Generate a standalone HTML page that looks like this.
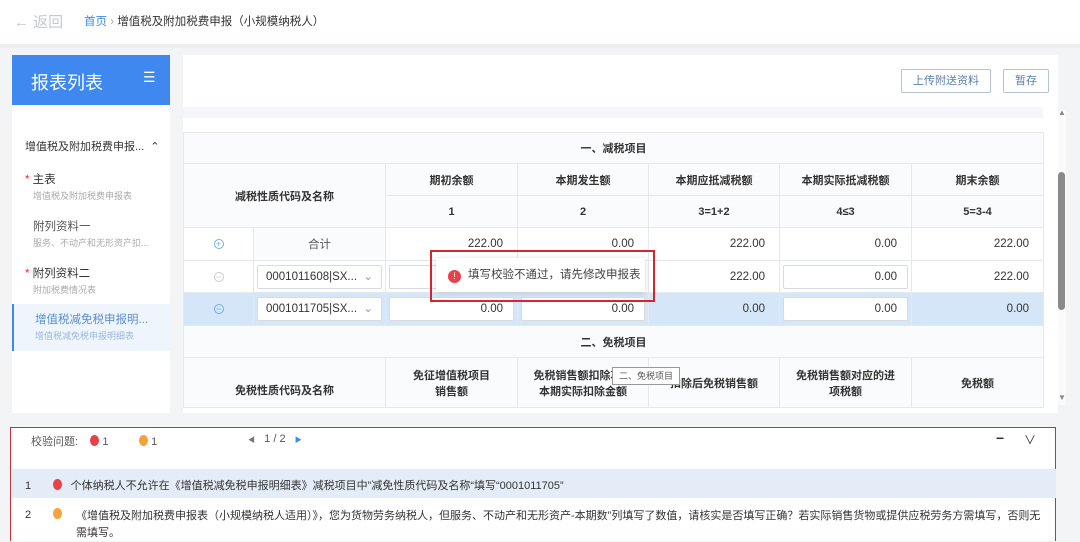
<!DOCTYPE html>
<html><head><meta charset="utf-8"><style>
*{margin:0;padding:0;box-sizing:border-box}
body{width:1080px;height:541px;background:#f3f4f6;font-family:"Liberation Sans","Noto Sans CJK SC",sans-serif;position:relative;overflow:hidden;color:#333;font-size:12px}
.a{position:absolute}
.top{left:0;top:0;width:1080px;height:44px;background:#fff}
.side{left:12px;top:55px;width:158px;height:360px;background:#fff}
.sh{left:12px;top:55px;width:158px;height:50px;background:#3f88ef;color:#fff;font-size:18px}
.main{left:183px;top:55px;width:875px;height:360px;background:#fff}
.btn{border:1px solid #b9c3cf;border-radius:2px;color:#5b7ea8;font-size:11px;text-align:center;line-height:22px;background:#fff}
table{position:absolute;left:183px;top:132px;border-collapse:collapse;table-layout:fixed;width:860px}
td{border:1px solid #e6e8eb;text-align:center;font-size:11px;height:32px;background:#fafbfc}
th{border:1px solid #e6e8eb;font-weight:bold;font-size:11px;color:#333;background:#fafbfc;height:32px}
.r{text-align:right;padding-right:14px;background:#fff;font-size:11.5px}
.w{background:#fff}
.sel td{background:#d6e6f9}
.inp{display:block;margin:0 3px;height:24px;border:1px solid #d7dce2;border-radius:2px;background:#fff;text-align:right;padding-right:10px;line-height:22px;font-size:11.5px}
.sel2{display:block;margin:0 3px;height:24px;border:1px solid #d7dce2;border-radius:2px;background:#fff;text-align:left;padding-left:8px;line-height:22px;font-size:11.5px}
.ic{display:inline-block;width:10px;height:10px;border:1px solid #7aaede;border-radius:50%;font-size:9px;line-height:8px;color:#7aaede;text-align:center}
.bot{left:10px;top:427px;width:1046px;height:114px;background:#fff;border:1.5px solid #c9303a;border-bottom:none}
.dot{display:inline-block;width:9px;height:11px;border-radius:50%;vertical-align:-1px}
</style></head><body>
<div class="a top"></div>
<div class="a" style="left:14px;top:11px;font-size:15px;color:#c5c9ce">← 返回</div>
<div class="a" style="left:84px;top:13px;font-size:11.5px;color:#333"><span style="color:#3f88ef">首页</span> <span style="color:#aaa">›</span> 增值税及附加税费申报（小规模纳税人）</div>
<div class="a" style="left:0;top:44px;width:1080px;height:4px;background:#eceef1"></div>
<div class="a side"></div>
<div class="a sh"><span class="a" style="left:19px;top:14px">报表列表</span><span class="a" style="left:131px;top:14px;font-size:14px">☰</span></div>
<div class="a" style="left:25px;top:138px;font-size:11px;color:#333">增值税及附加税费申报... &nbsp;⌃</div>
<div class="a" style="left:25px;top:171px;font-size:11.5px"><span style="color:#d33">*</span> 主表</div>
<div class="a" style="left:33px;top:189px;font-size:9px;color:#aaa">增值税及附加税费申报表</div>
<div class="a" style="left:33px;top:218px;font-size:11.5px;color:#555">附列资料一</div>
<div class="a" style="left:33px;top:236px;font-size:9px;color:#aaa">服务、不动产和无形资产扣...</div>
<div class="a" style="left:25px;top:265px;font-size:11.5px"><span style="color:#d33">*</span> 附列资料二</div>
<div class="a" style="left:33px;top:283px;font-size:9px;color:#aaa">附加税费情况表</div>
<div class="a" style="left:12px;top:304px;width:158px;height:47px;background:#eef5fd;border-left:2px solid #3f88ef"></div>
<div class="a" style="left:35px;top:311px;font-size:11.5px;color:#5a8fd0">增值税减免税申报明...</div>
<div class="a" style="left:35px;top:329px;font-size:9px;color:#9db8d8">增值税减免税申报明细表</div>
<div class="a main"></div>
<div class="a btn" style="left:901px;top:69px;width:90px;height:24px">上传附送资料</div>
<div class="a btn" style="left:1003px;top:69px;width:46px;height:24px">暂存</div>
<div class="a" style="left:183px;top:107px;width:860px;height:11px;background:#f4f6f9"></div>
<div class="a" style="left:1058px;top:110px;width:8px;height:295px;background:#fafafa"></div>
<div class="a" style="left:1058px;top:172px;width:7px;height:138px;background:#8a8a8a;border-radius:4px"></div>
<div class="a" style="left:1058px;top:108px;font-size:8px;color:#888">▲</div>
<div class="a" style="left:1058px;top:393px;font-size:8px;color:#888">▼</div>
<table>
<colgroup><col style="width:70px"><col style="width:132px"><col style="width:132px"><col style="width:131px"><col style="width:131px"><col style="width:132px"><col style="width:132px"></colgroup>
<tr><th colspan="7" style="height:31px">一、减税项目</th></tr>
<tr><th colspan="2" rowspan="2">减税性质代码及名称</th><th>期初余额</th><th>本期发生额</th><th>本期应抵减税额</th><th>本期实际抵减税额</th><th>期末余额</th></tr>
<tr><th>1</th><th>2</th><th>3=1+2</th><th>4≤3</th><th>5=3-4</th></tr>
<tr><td class="w" style="height:33px"><span class="ic">+</span></td><td style="color:#555;font-size:11.5px">合计</td><td class="r">222.00</td><td class="r">0.00</td><td class="r">222.00</td><td class="r">0.00</td><td class="r">222.00</td></tr>
<tr><td class="w"><span class="ic" style="border-color:#ccc;color:#ccc">−</span></td><td class="w"><span class="sel2">0001011608|SX... <span style="color:#999;float:right;margin-right:8px">⌄</span></span></td><td class="w"><span class="inp"></span></td><td class="w"><span class="inp"></span></td><td class="r">222.00</td><td class="w"><span class="inp">0.00</span></td><td class="r">222.00</td></tr>
<tr class="sel"><td style="height:33px"><span class="ic">−</span></td><td><span class="sel2">0001011705|SX... <span style="color:#999;float:right;margin-right:8px">⌄</span></span></td><td><span class="inp">0.00</span></td><td><span class="inp">0.00</span></td><td class="r" style="background:#d6e6f9">0.00</td><td><span class="inp">0.00</span></td><td class="r" style="background:#d6e6f9">0.00</td></tr>
<tr><th colspan="7">二、免税项目</th></tr>
<tr><th colspan="2" style="height:50px;padding-top:14px">免税性质代码及名称</th><th>免征增值税项目<br>销售额</th><th>免税销售额扣除项目<br>本期实际扣除金额</th><th>扣除后免税销售额</th><th>免税销售额对应的进<br>项税额</th><th>免税额</th></tr>
</table>
<div class="a" style="left:612px;top:367px;width:68px;height:18px;background:#fff;border:1px solid #999;font-size:9px;line-height:16px;text-align:center;color:#555">二、免税项目</div>
<div class="a" style="left:430px;top:250px;width:225px;height:52px;border:2px solid #d4262e"></div>
<div class="a" style="left:436px;top:258px;width:209px;height:34px;background:#fff;box-shadow:0 1px 6px rgba(0,0,0,.15);font-size:11.5px;line-height:34px;padding-left:12px;color:#444"><span style="display:inline-block;width:13px;height:13px;border-radius:50%;background:#e8414a;color:#fff;font-size:9px;line-height:13px;text-align:center;vertical-align:-1px;margin-right:7px">!</span>填写校验不通过，请先修改申报表</div>
<div class="a" style="left:0;top:413px;width:1080px;height:14px;background:#f3f4f6"></div>
<div class="a bot"></div>
<div class="a" style="left:31px;top:433px;font-size:11px;color:#555">校验问题: &nbsp;&nbsp;&nbsp;<span class="dot" style="background:#e8414a"></span> 1 &nbsp;&nbsp;&nbsp;&nbsp;&nbsp;&nbsp;&nbsp;&nbsp;&nbsp;<span class="dot" style="background:#f4a23a"></span> 1</div>
<div class="a" style="left:248px;top:433px;font-size:11px;color:#555"><span style="font-size:7px;color:#777">◀</span> &nbsp;&nbsp;1 / 2 &nbsp;&nbsp;<span style="font-size:7px;color:#3f88ef">▶</span></div>
<div class="a" style="left:996px;top:430px;font-size:14px;color:#333;font-weight:bold">−</div>
<div class="a" style="left:1024px;top:431px;font-size:12px;color:#333">∨</div>
<div class="a" style="left:12px;top:469px;width:1044px;height:29px;background:#e3ecf7"></div>
<div class="a" style="left:25px;top:477px;font-size:11px;color:#333">1 &nbsp;&nbsp;&nbsp;&nbsp;&nbsp;&nbsp;<span class="dot" style="background:#e8414a"></span> &nbsp;&nbsp;个体纳税人不允许在《增值税减免税申报明细表》减税项目中”减免性质代码及名称“填写“0001011705”</div>
<div class="a" style="left:25px;top:508px;font-size:11px;color:#333">2 &nbsp;&nbsp;&nbsp;&nbsp;&nbsp;&nbsp;<span class="dot" style="background:#f4a23a"></span></div>
<div class="a" style="left:76px;top:508px;width:965px;font-size:11px;color:#333;line-height:17px">《增值税及附加税费申报表（小规模纳税人适用）》，您为货物劳务纳税人，但服务、不动产和无形资产-本期数”列填写了数值，请核实是否填写正确？若实际销售货物或提供应税劳务方需填写，否则无需填写。</div>
</body></html>
